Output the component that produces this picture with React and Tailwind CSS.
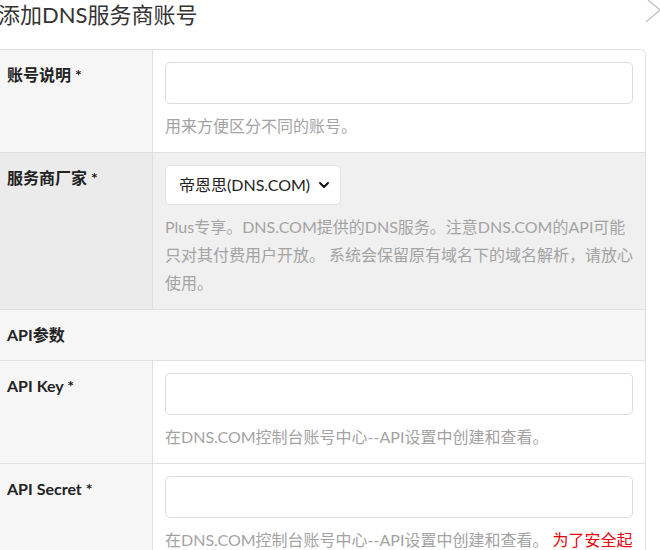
import React from "react";

const font = { fontFamily: 'Lato, "Noto Sans CJK SC", sans-serif' };

function Label({ children, className = "" }) {
  return (
    <div className={`w-[153px] shrink-0 border-r border-[#e0e0e0] pl-[7px] pt-3 text-[16px] font-bold leading-[26px] text-[#222] ${className}`}>
      {children}
    </div>
  );
}

function Hint({ children, className = "" }) {
  return <div className={`mt-2 text-[16px] leading-[28px] text-[#a3a3a3] ${className}`}>{children}</div>;
}

function Input() {
  return <div className="h-[42px] w-full rounded-[5px] border border-[#dcdcdc] bg-white" />;
}

export default function App() {
  return (
    <div className="relative w-[660px] overflow-hidden bg-white" style={font}>
      <div className="h-[49px]">
        <div className="-ml-[2px] text-[22px] leading-[30px] text-[#333]">添加DNS服务商账号</div>
      </div>
      <svg className="absolute left-[640px] top-0" width="40" height="30" viewBox="0 0 40 30">
        <path d="M8 0 L20 10 L6 22 M20 10 L34 22 M20 10 L32 0" fill="none" stroke="#c4c4c4" strokeWidth="1.5" />
      </svg>
      <div className="w-[646px] overflow-hidden rounded-tr-[6px] border-t border-r border-[#e0e0e0]">
        {/* Row 1 */}
        <div className="flex border-b border-[#e0e0e0]">
          <Label className="bg-[#f6f6f6]">账号说明 *</Label>
          <div className="flex-1 bg-white px-3 pt-3 pb-3">
            <Input />
            <Hint>用来方便区分不同的账号。</Hint>
          </div>
        </div>
        {/* Row 2 */}
        <div className="flex border-b border-[#e0e0e0]">
          <Label className="bg-[#ebebeb]">服务商厂家 *</Label>
          <div className="flex-1 bg-[#f0f0f0] px-3 pt-3 pb-3">
            <div className="flex h-[40px] w-[176px] items-center justify-between rounded-[5px] border border-[#e2e2e2] bg-white pl-[13px] pr-[10px] text-[16px] text-[#222]">
              <span>帝恩思(DNS.COM)</span>
              <svg width="12" height="12" viewBox="0 0 12 12">
                <path d="M2 4 L6 8 L10 4" fill="none" stroke="#111" strokeWidth="2" strokeLinecap="round" strokeLinejoin="round" />
              </svg>
            </div>
            <Hint className="mr-[-4px]">
              Plus专享。DNS.COM提供的DNS服务。注意DNS.COM的API可能只对其付费用户开放。 系统会保留原有域名下的域名解析，请放心使用。
            </Hint>
          </div>
        </div>
        {/* Section */}
        <div className="flex h-[51px] items-center border-b border-[#e0e0e0] bg-[#f6f6f6] pl-[7px] text-[16px] font-bold text-[#222]">
          API参数
        </div>
        {/* Row 4 */}
        <div className="flex border-b border-[#e0e0e0]">
          <Label className="bg-[#f6f6f6]">API Key *</Label>
          <div className="flex-1 bg-white px-3 pt-3 pb-3">
            <Input />
            <Hint>在DNS.COM控制台账号中心--API设置中创建和查看。</Hint>
          </div>
        </div>
        {/* Row 5 */}
        <div className="flex border-b border-[#e0e0e0]">
          <Label className="bg-[#f6f6f6]">API Secret *</Label>
          <div className="flex-1 bg-white px-3 pt-3 pb-3">
            <Input />
            <Hint>
              在DNS.COM控制台账号中心--API设置中创建和查看。<span className="ml-[4px] text-[#e8000b]">为了安全起见，请不要把此密钥泄露给他人。</span>
            </Hint>
          </div>
        </div>
      </div>
    </div>
  );
}
